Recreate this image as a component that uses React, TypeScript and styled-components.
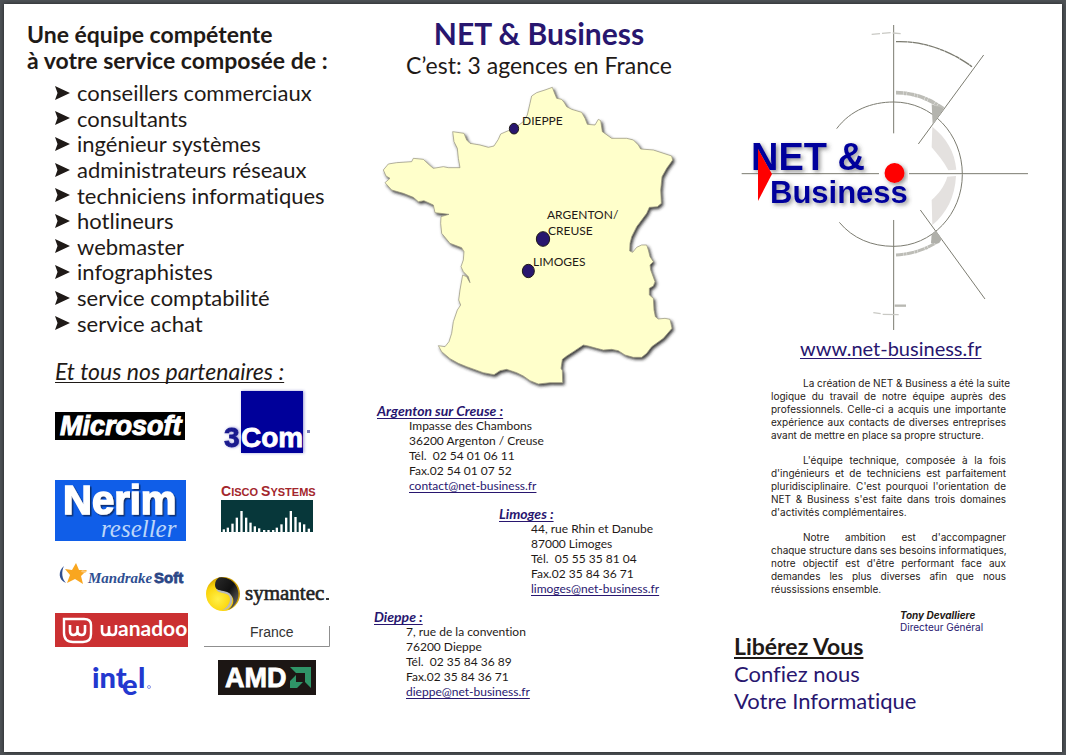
import React from "react";
import styled, { createGlobalStyle, css } from "styled-components";

const ink = "#1f1a17";
const navy = "#28166f";

const GlobalStyle = createGlobalStyle`
  *, *::before, *::after { box-sizing: border-box; }
  body {
    margin: 0;
    background: #4e5256;
    color: ${ink};
    font-family: Lato, "Liberation Sans", sans-serif;
    font-variant-ligatures: none;
  }
  h1, h2, h3, p, ul { margin: 0; padding: 0; font-weight: 400; }
  svg { display: block; }
`;

const Viewer = styled.div`
  padding: 4px 4px 3px;
`;

const Sheet = styled.main`
  display: grid;
  grid-template-columns: 364fr 342fr 352fr;
  min-height: calc(100vh - 7px);
  background: #fff;
  box-shadow: 0 0 4px rgba(0, 0, 0, 0.6);
`;

const Panel = styled.section`
  display: flex;
  flex-direction: column;
  min-width: 0;
`;

const TeamPanel = styled(Panel)`
  padding: 17px 0 0 23px;
`;

const AgencyPanel = styled(Panel)`
  padding-top: 12px;
`;

const CoverPanel = styled(Panel)`
  padding: 21px 0 0 24px;
`;

const TeamTitle = styled.h2`
  font-size: 23px;
  line-height: 26px;
  font-weight: 700;
`;

const RoleList = styled.ul`
  display: grid;
  grid-auto-rows: 1fr;
  height: 256px;
  margin: 7px 0 0 28px;
  list-style: none;
`;

const Role = styled.li`
  display: flex;
  align-items: center;
  gap: 7px;
  font-size: 22px;
  line-height: 25px;
`;

const underline = css`
  text-decoration: underline;
  text-decoration-thickness: 1px;
  text-underline-offset: 2px;
  text-decoration-skip-ink: none;
`;

const PartnerTitle = styled.h3`
  ${underline}
  margin: 22px 0 0 28px;
  font-size: 23px;
  line-height: 26px;
  font-style: italic;
`;

const Partners = styled.div`
  display: flex;
  gap: 16px;
  margin-left: 28px;
`;

const LogoColumn = styled.div<{ $width: number }>`
  display: flex;
  flex-direction: column;
  align-items: center;
  width: ${(p) => p.$width}px;
`;

const Logo = styled.svg<{ $above: number }>`
  flex: none;
  margin-top: ${(p) => p.$above}px;
  overflow: visible;
`;

const CompanyName = styled.h1`
  color: ${navy};
  font-size: 30px;
  line-height: 35px;
  font-weight: 700;
  text-align: center;
`;

const Tagline = styled.p`
  font-size: 23px;
  line-height: 28px;
  text-align: center;
`;

const MapDrawing = styled.svg`
  align-self: center;
  margin-top: 1px;
`;

const Offices = styled.div`
  display: flex;
  flex-direction: column;
  gap: 13px;
  margin-top: 13px;
`;

const Office = styled.address<{ $indent: number }>`
  display: flex;
  flex-direction: column;
  align-items: flex-start;
  padding-left: ${(p) => p.$indent}px;
  font-size: 12px;
  line-height: 15px;
  font-style: normal;
`;

const OfficeName = styled.h3`
  ${underline}
  color: ${navy};
  font-size: 14px;
  line-height: 15px;
  font-weight: 700;
  font-style: italic;
`;

const OfficeLine = styled.span`
  padding-left: 32px;
  white-space: pre;
`;

const MailLink = styled.a`
  ${underline}
  margin-left: 32px;
  color: ${navy};
`;

const CoverDrawing = styled.svg`
  margin-left: 6px;
`;

const SiteLink = styled.a`
  ${underline}
  align-self: flex-start;
  margin: 4px 0 0 66px;
  color: ${navy};
  font-size: 20px;
  line-height: 26px;
`;

const Story = styled.div`
  display: flex;
  flex-direction: column;
  gap: 12px;
  width: 235px;
  margin: 16px 0 0 37px;
  font-family: Inter, "Liberation Sans", sans-serif;
  font-size: 10px;
  line-height: 13px;
`;

const StoryLine = styled.span`
  display: block;
  text-align: justify;
  text-align-last: justify;
  white-space: nowrap;

  &:first-child { padding-left: 32px; }
  &:last-child { text-align-last: left; }
`;

const Signature = styled.p`
  margin: 13px 0 0 166px;
  color: ${navy};
  font-family: Inter, "Liberation Sans", sans-serif;
  font-size: 10px;
  line-height: 12px;
`;

const Signer = styled.strong`
  display: block;
  color: ${ink};
  font-style: italic;
`;

const Slogan = styled.p`
  color: ${navy};
  font-size: 22px;
  line-height: 27px;
`;

const SloganLead = styled.strong`
  display: block;
  color: ${ink};
  font-size: 23px;
  text-decoration: underline;
  text-decoration-thickness: 2px;
  text-underline-offset: 2px;
`;

const SloganLine = styled.span`
  display: block;
`;

const roles = [
  "conseillers commerciaux",
  "consultants",
  "ingénieur systèmes",
  "administrateurs réseaux",
  "techniciens informatiques",
  "hotlineurs",
  "webmaster",
  "infographistes",
  "service comptabilité",
  "service achat",
];

const offices = [
  {
    name: "Argenton sur Creuse :",
    indent: 9,
    lines: ["Impasse des Chambons", "36200 Argenton / Creuse", "Tél.  02 54 01 06 11", "Fax.02 54 01 07 52"],
    mail: "contact@net-business.fr",
  },
  {
    name: "Limoges :",
    indent: 131,
    lines: ["44, rue Rhin et Danube", "87000 Limoges", "Tél.  05 55 35 81 04", "Fax.02 35 84 36 71"],
    mail: "limoges@net-business.fr",
  },
  {
    name: "Dieppe :",
    indent: 6,
    lines: ["7, rue de la convention", "76200 Dieppe", "Tél.  02 35 84 36 89", "Fax.02 35 84 36 71"],
    mail: "dieppe@net-business.fr",
  },
];

const story = [
  [
    "La création de NET & Business a été la suite",
    "logique du travail de notre équipe auprès des",
    "professionnels. Celle-ci a acquis une importante",
    "expérience aux contacts de diverses entreprises",
    "avant de mettre en place sa propre structure.",
  ],
  [
    "L'équipe technique, composée à la fois",
    "d'ingénieurs et de techniciens est parfaitement",
    "pluridisciplinaire. C'est pourquoi l'orientation de",
    "NET & Business s'est faite dans trois domaines",
    "d'activités complémentaires.",
  ],
  [
    "Notre ambition est d'accompagner",
    "chaque structure dans ses besoins informatiques,",
    "notre objectif est d'être performant face aux",
    "demandes les plus diverses afin que nous",
    "réussissions ensemble.",
  ],
];

const sans = '"Liberation Sans", sans-serif';
const serif = '"Liberation Serif", serif';

const Arrow = () => (
  <svg width="15" height="14" viewBox="0 0 15 14">
    <path d="M0 0 L15 7 L0 14 L2.500 7 Z" fill={ink} />
  </svg>
);

const MicrosoftLogo = () => (
  <Logo $above={28} width="133" height="28" viewBox="0 0 133 28">
    <rect width="130" height="28" fill="#000" />
    <text x="5" y="23" fontFamily={sans} fontSize="27" fontWeight="700" fontStyle="italic" fill="#fff" stroke="#fff" strokeWidth="1">
      Microsoft
    </text>
  </Logo>
);

const NerimLogo = () => (
  <Logo $above={40} width="133" height="61" viewBox="0 0 133 61">
    <defs>
      <filter id="emboss" x="-5%" y="-5%" width="112%" height="115%">
        <feDropShadow dx="1.500" dy="1.500" stdDeviation="0.6" floodColor="#0c2a66" floodOpacity="0.95" />
      </filter>
    </defs>
    <rect width="131" height="61" fill="#105ee8" />
    <text x="8" y="34" fontFamily={sans} fontSize="40" fontWeight="700" fill="#fff" stroke="#fff" strokeWidth="1.500" filter="url(#emboss)">
      Nerim
    </text>
    <text x="46" y="57" fontFamily={serif} fontSize="25" fontStyle="italic" fill="#bcd6fa">reseller</text>
  </Logo>
);

const MandrakeLogo = () => (
  <Logo $above={22} width="133" height="25" viewBox="0 0 133 25">
    <path d="M9 3 C3 8 3 17 11 20 C7 16 6 9 9 3 Z" fill="#2f4f92" />
    <path d="M21 0 L24 7 L32 7 L26 13 L28 21 L20 16 L12 20 L15 12 L10 6 L17 7 Z" fill="#f9a61f" />
    <path d="M27 7 l5 1 l-2 2 l-4 -1 Z" fill="#fbc877" />
    <text x="33" y="20" fontFamily={serif} fontSize="15" fontWeight="700" fontStyle="italic" fill="#2f4f92">Mandrake</text>
    <text x="99" y="20" fontFamily={sans} fontSize="15" fontWeight="700" fill="#2b4686" stroke="#2b4686" strokeWidth="0.8">Soft</text>
  </Logo>
);

const WanadooLogo = () => (
  <Logo $above={25} width="133" height="34" viewBox="0 0 133 34">
    <rect width="133" height="34" fill="#cb3032" />
    <path d="M9 6 H29 Q36 6 36 12 V21 Q36 29 28 29 H18 Q9 29 9 20 Z" fill="none" stroke="#fff" strokeWidth="2.400" />
    <path d="M15 12 V18 Q15 22 18.500 22 Q22 22 22.500 18.500 V13 V18.500 Q23 22 26.500 22 Q30 22 30 18 V12" fill="none" stroke="#fff" strokeWidth="2.600" />
    <path d="M47 12 V18 Q47 22 50.500 22 Q54 22 54 18 V13 V18 Q54 22 57.500 22 Q61 22 61 18 V12" fill="none" stroke="#fff" strokeWidth="2.600" />
    <text x="63" y="23" fontFamily="Lato, sans-serif" fontSize="21" fontWeight="700" fill="#fff">anadoo</text>
  </Logo>
);

const IntelLogo = () => (
  <Logo $above={19} width="60" height="32" viewBox="0 0 60 32">
    <g fontFamily="Lato, sans-serif" fontWeight="900" fill="#2338cf">
      <text x="0" y="22" fontSize="29">int</text>
      <text x="30" y="29" fontSize="29">e</text>
      <text x="46" y="22" fontSize="29">l</text>
    </g>
    <circle cx="57" cy="21" r="1.500" fill="none" stroke="#8a97e6" />
  </Logo>
);

const ThreeComLogo = () => (
  <Logo $above={7} width="96" height="62" viewBox="0 0 96 62">
    <defs>
      <filter id="halo" x="-10%" y="-10%" width="125%" height="120%">
        <feDropShadow dx="1" dy="0" stdDeviation="1.500" floodColor="#00009a" floodOpacity="0.4" />
      </filter>
    </defs>
    <rect x="22" y="0" width="62" height="62" fill="#00009a" filter="url(#halo)" />
    <g fontFamily={sans} fontSize="28" fontWeight="700" strokeWidth="0.8">
      <text x="5" y="56" fill="#1a1a8e" stroke="#1a1a8e" filter="url(#halo)">3</text>
      <text x="22" y="56" fill="#fff" stroke="#fff">Com</text>
    </g>
    <rect x="88" y="39" width="3" height="3" fill="#7a7ab8" />
  </Logo>
);

const ciscoBars = [
  [549, 445], [561, 440], [575, 428], [588, 410], [602, 390], [616, 410], [629, 425], [642, 436], [655, 442], [670, 447],
  [683, 447], [697, 447], [708, 440], [722, 430], [736, 410], [750, 390], [764, 408], [777, 424], [790, 430], [804, 443],
];

const CiscoLogo = () => (
  <Logo $above={30} width="94" height="49" viewBox="0 0 94 49">
    <g fontFamily={sans} fontWeight="700" fill="#a3262c">
      <text x="1" y="13" fontSize="14">
        C<tspan fontSize="11">ISCO </tspan>S<tspan fontSize="11">YSTEMS</tspan>
      </text>
    </g>
    <rect x="1" y="17" width="92" height="32" fill="#07373a" />
    <g transform="translate(-179.330 -102) scale(0.33333)" fill="#fff">
      {ciscoBars.map(([x, y]) => (
        <rect key={x} x={x - 3} y={y} width="7" height={454 - y} />
      ))}
    </g>
  </Logo>
);

const SymantecLogo = () => (
  <Logo $above={45} width="126" height="70" viewBox="0 0 126 70">
    <defs>
      <radialGradient id="gold" cx="35%" cy="65%" r="65%">
        <stop offset="0" stopColor="#fff04a" />
        <stop offset="0.6" stopColor="#fbd40a" />
        <stop offset="1" stopColor="#c99a00" />
      </radialGradient>
      <linearGradient id="coal" x1="0" y1="0" x2="1" y2="1">
        <stop offset="0" stopColor="#2b2b2b" />
        <stop offset="0.5" stopColor="#111" />
        <stop offset="1" stopColor="#777" />
      </linearGradient>
    </defs>
    <circle cx="19" cy="17" r="17" fill="url(#gold)" />
    <path d="M15 0.500 A17 17 0 0 1 24 33 C31 28 31 20 25 17 C18 14 11 14 11 8 C11 4 13 2 15 0.500 Z" fill="url(#coal)" />
    <path d="M12 12 C14 18 26 14 26 22 C26 28 21 32 18 33 C29 33 31 20 25 16 C20 13 15 14 12 12 Z" fill="#b9b9b9" />
    <text x="41" y="23" fontFamily={serif} fontSize="21" fill="#222" stroke="#222" strokeWidth="0.600">symantec</text>
    <rect x="122" y="21" width="3" height="2" fill="#333" />
    <text x="46" y="60" fontFamily={sans} fontSize="14" fill="#333">France</text>
    <path d="M0 69.500 H125.500 V49" fill="none" stroke="#8f8f8f" />
  </Logo>
);

const AmdLogo = () => (
  <Logo $above={13} width="98" height="35" viewBox="0 0 98 35">
    <rect width="98" height="35" fill="#1c1614" />
    <text x="7" y="27" fontFamily={sans} fontSize="27" fontWeight="700" fill="#fff" stroke="#fff" strokeWidth="0.800">AMD</text>
    <path d="M72 7 H93 V28 L87 22 V13 H78 Z" fill="#2f9467" />
    <path d="M78 15 V22 H85 L79 28 H72 V21 Z" fill="#2f9467" />
  </Logo>
);

const coast =
  "547,22 553,38 560,55 575,58 583,68 590,80 605,88 635,97 645,115 652,133 675,135 685,118 692,122 697,155 725,175 770,175 790,180 805,195 812,207 850,210 905,228 908,240 890,265 876,290 872,330 874,370 862,380 838,382 830,400 800,440 785,470 780,490 779,513 788,517 800,502 815,495 830,495 835,510 840,530 850,545 840,555 842,570 855,605 850,618 838,625 838,645 850,655 852,690 856,710 865,717 885,715 900,718 906,745 880,775 845,800 830,820 815,832 790,832 765,825 745,812 725,808 700,810 680,805 655,798 640,795 610,815 590,828 577,838 573,865 577,872 578,908 540,908 505,912 480,902 460,888 440,878 410,868 390,872 372,884 340,878 290,860 265,850 240,836 215,815 205,797 225,800 237,785 245,760 250,725 262,690 272,675 266,660 270,630 278,585 290,590 300,608 295,590 280,575 273,560 280,540 282,515 275,503 240,490 215,460 212,430 213,410 237,403 195,398 190,375 162,362 145,365 130,352 100,340 65,330 45,308 60,295 48,288 40,270 55,252 80,248 125,245 130,235 160,238 178,255 190,265 220,260 235,263 270,263 265,235 262,205 252,185 248,155 282,160 290,180 300,190 330,195 355,202 372,198 385,178 392,162 415,152 432,146 460,125 472,105 480,70 485,48 500,38 525,30";

const FranceMap = () => (
  <MapDrawing width="322" height="310" viewBox="378 80 322 310">
    <defs>
      <filter id="relief" x="-5%" y="-5%" width="112%" height="112%">
        <feDropShadow dx="5" dy="6" stdDeviation="4" floodColor="#222" floodOpacity="0.9" />
      </filter>
    </defs>
    <g transform="translate(370 80) scale(0.33333)">
      <polygon points={coast} fill="#ffffcb" stroke="#8f8c78" strokeWidth="2" strokeLinejoin="round" filter="url(#relief)" />
      <g fill={navy} stroke={ink} strokeWidth="3">
        <ellipse cx="432" cy="146" rx="14" ry="16" />
        <ellipse cx="519" cy="477" rx="20" ry="22" />
        <ellipse cx="475" cy="573" rx="18" ry="20" />
      </g>
    </g>
    <g fontFamily="Lato, sans-serif" fontSize="12" fill={ink}>
      <text x="522" y="125">DIEPPE</text>
      <text x="547" y="219">ARGENTON/</text>
      <text x="548" y="235">CREUSE</text>
      <text x="533" y="266">LIMOGES</text>
    </g>
  </MapDrawing>
);

const CoverArt = () => (
  <CoverDrawing width="290" height="306" viewBox="740 25 290 306">
    <defs>
      <filter id="soft" x="-10%" y="-20%" width="125%" height="150%">
        <feDropShadow dx="2" dy="2" stdDeviation="2" floodColor="#444" floodOpacity="0.6" />
      </filter>
    </defs>
    <g transform="translate(730 10) scale(0.33333)" fill="none" stroke="#7b7b70" strokeWidth="3">
      <path d="M491 45 V370 M491 630 V960 M35 491 H447 M537 491 H894" />
      <path d="M320 356 C362 300 425 276 491 276 C606 276 697 372 697 493 C697 612 606 709 491 709 C425 709 368 685 328 637" />
      <path d="M761 135 L565 402 M571 600 L765 867" />
      <path d="M498 95 C580 92 660 122 726 170" strokeWidth="4" strokeDasharray="34 1 14 1" />
      <path d="M498 248 C550 248 595 265 640 296" stroke="#bdbdb7" strokeWidth="11" strokeDasharray="22 1 9 1" />
      <path d="M498 735 C550 732 592 716 628 692" stroke="#bdbdb7" strokeWidth="9" strokeDasharray="22 1 9 1" />
      <path d="M605 283 L642 296 L608 345 Z" fill="#b4b4ae" stroke="none" />
      <path d="M618 662 L636 688 L626 700 L603 700 L605 672 Z" fill="#b0b0aa" stroke="none" />
      <path d="M607 350 C650 385 674 425 679 479 L655 481 C642 455 622 432 605 412 Z" fill="#e4e1df" stroke="none" />
      <path d="M678 498 C675 560 650 610 607 645 L605 570 C625 552 643 530 652 500 Z" fill="#e4e1df" stroke="none" />
      <path d="M425 73 L450 71 M456 70 L482 68 M488 69 L512 71 M430 908 L452 911 M458 913 L506 914" stroke="#c9c9c4" strokeWidth="4" />
      <path d="M494 887 H528" stroke="#b8b8b2" strokeWidth="7" />
    </g>
    <g fontFamily={sans} fontWeight="700" fill="#00009c" filter="url(#soft)">
      <text x="751" y="170" fontSize="38">NET &amp;</text>
      <text x="770" y="203" fontSize="31">Business</text>
    </g>
    <path d="M758 149 L772 174 L758 201 Z" fill="#f00" />
    <circle cx="894.500" cy="173" r="10" fill="#f00" filter="url(#soft)" />
  </CoverDrawing>
);

export default function App() {
  return (
    <Viewer>
      <GlobalStyle />
      <Sheet>
        <TeamPanel>
          <TeamTitle>
            Une équipe compétente
            <br />à votre service composée de :
          </TeamTitle>
          <RoleList>
            {roles.map((role) => (
              <Role key={role}>
                <Arrow />
                {role}
              </Role>
            ))}
          </RoleList>
          <PartnerTitle>Et tous nos partenaires :</PartnerTitle>
          <Partners>
            <LogoColumn $width={133}>
              <MicrosoftLogo />
              <NerimLogo />
              <MandrakeLogo />
              <WanadooLogo />
              <IntelLogo />
            </LogoColumn>
            <LogoColumn $width={126}>
              <ThreeComLogo />
              <CiscoLogo />
              <SymantecLogo />
              <AmdLogo />
            </LogoColumn>
          </Partners>
        </TeamPanel>

        <AgencyPanel>
          <CompanyName>NET &amp; Business</CompanyName>
          <Tagline>C’est: 3 agences en France</Tagline>
          <FranceMap />
          <Offices>
            {offices.map((office) => (
              <Office key={office.name} $indent={office.indent}>
                <OfficeName>{office.name}</OfficeName>
                {office.lines.map((line) => (
                  <OfficeLine key={line}>{line}</OfficeLine>
                ))}
                <MailLink href={`mailto:${office.mail}`}>{office.mail}</MailLink>
              </Office>
            ))}
          </Offices>
        </AgencyPanel>

        <CoverPanel>
          <CoverArt />
          <SiteLink href="http://www.net-business.fr">www.net-business.fr</SiteLink>
          <Story>
            {story.map((lines) => (
              <p key={lines[0]}>
                {lines.map((line) => (
                  <StoryLine key={line}>{line}</StoryLine>
                ))}
              </p>
            ))}
          </Story>
          <Signature>
            <Signer>Tony Devalliere</Signer>
            Directeur Général
          </Signature>
          <Slogan>
            <SloganLead>Libérez Vous</SloganLead>
            <SloganLine>Confiez nous</SloganLine>
            <SloganLine>Votre Informatique</SloganLine>
          </Slogan>
        </CoverPanel>
      </Sheet>
    </Viewer>
  );
}
